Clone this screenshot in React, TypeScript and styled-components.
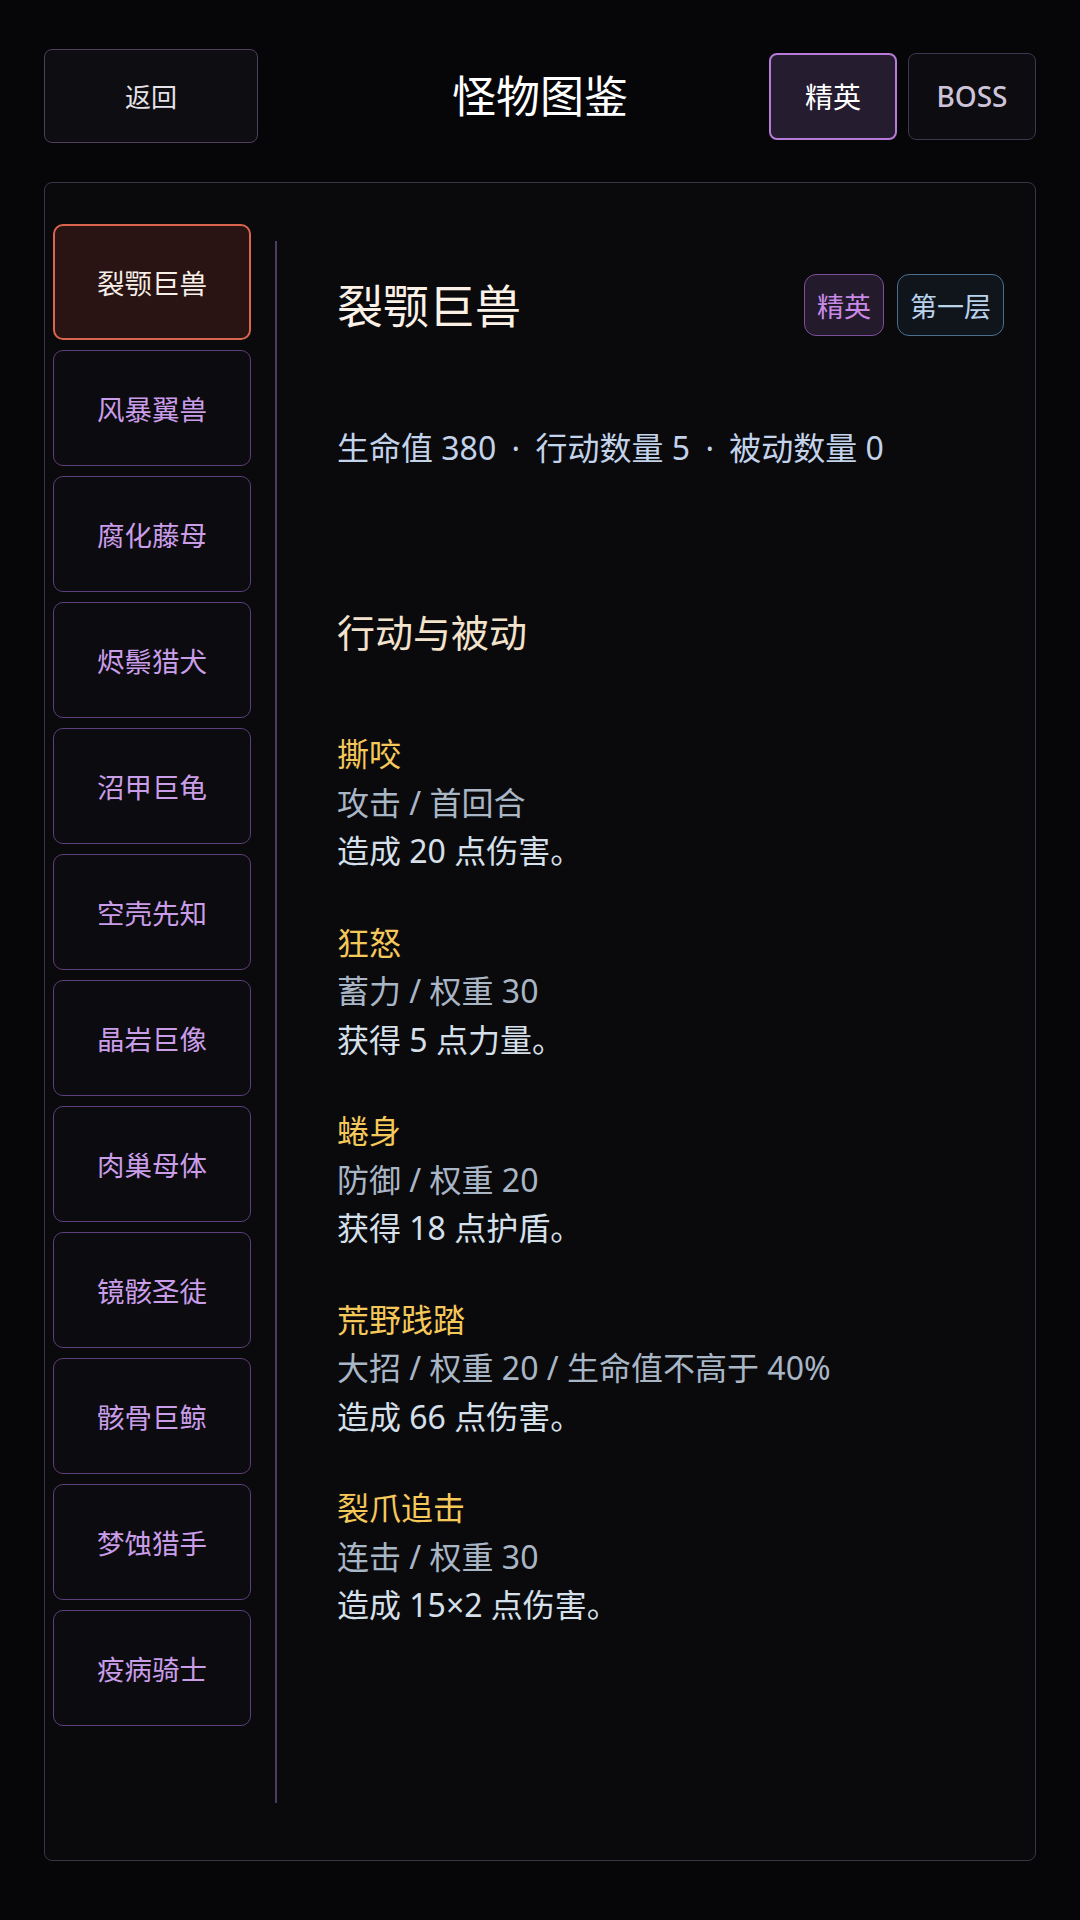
import styled, { createGlobalStyle } from 'styled-components';

const GlobalStyle = createGlobalStyle`
  html, body {
    margin: 0;
    padding: 0;
    background: #060609;
  }
  body {
    font-family: "Noto Sans", "Noto Sans CJK SC", sans-serif;
    color: #e8e4ec;
  }
  * {
    box-sizing: border-box;
  }
`;

const monsters = [
  '裂颚巨兽',
  '风暴翼兽',
  '腐化藤母',
  '烬鬃猎犬',
  '沼甲巨龟',
  '空壳先知',
  '晶岩巨像',
  '肉巢母体',
  '镜骸圣徒',
  '骸骨巨鲸',
  '梦蚀猎手',
  '疫病骑士',
];

const skills = [
  { name: '撕咬', meta: '攻击 / 首回合', desc: '造成 20 点伤害。' },
  { name: '狂怒', meta: '蓄力 / 权重 30', desc: '获得 5 点力量。' },
  { name: '蜷身', meta: '防御 / 权重 20', desc: '获得 18 点护盾。' },
  { name: '荒野践踏', meta: '大招 / 权重 20 / 生命值不高于 40%', desc: '造成 66 点伤害。' },
  { name: '裂爪追击', meta: '连击 / 权重 30', desc: '造成 15×2 点伤害。' },
];

const App = () => {
  return (
    <Page>
      <GlobalStyle />
      <Header>
        <BackButton>返回</BackButton>
        <PageTitle>怪物图鉴</PageTitle>
        <Tabs>
          <TabButton $active>精英</TabButton>
          <TabButton>BOSS</TabButton>
        </Tabs>
      </Header>
      <Panel>
        <Sidebar>
          {monsters.map((name, index) => (
            <MonsterItem key={name} $selected={index === 0}>
              {name}
            </MonsterItem>
          ))}
        </Sidebar>
        <Detail>
          <DetailHead>
            <MonsterName>裂颚巨兽</MonsterName>
            <Tags>
              <Tag $tone="elite">精英</Tag>
              <Tag $tone="floor">第一层</Tag>
            </Tags>
          </DetailHead>
          <Stats>
            生命值 380 <Dot>·</Dot> 行动数量 5 <Dot>·</Dot> 被动数量 0
          </Stats>
          <SectionTitle>行动与被动</SectionTitle>
          <SkillList>
            {skills.map((skill) => (
              <Skill key={skill.name}>
                <SkillName>{skill.name}</SkillName>
                <SkillMeta>{skill.meta}</SkillMeta>
                <SkillDesc>{skill.desc}</SkillDesc>
              </Skill>
            ))}
          </SkillList>
        </Detail>
      </Panel>
    </Page>
  );
};

const Page = styled.div`
  min-height: 100vh;
  display: flex;
  flex-direction: column;
  padding: 49px 44px 59px;
`;

const Header = styled.header`
  display: grid;
  grid-template-columns: 1fr auto 1fr;
  align-items: center;
  height: 94px;
`;

const BackButton = styled.button`
  justify-self: start;
  width: 214px;
  height: 94px;
  background: #0e0d11;
  border: 1px solid #4d3f5e;
  border-radius: 8px;
  color: #e6e2ea;
  font-family: "Noto Sans", "Noto Sans CJK SC", sans-serif;
  font-size: 26px;
  cursor: pointer;
`;

const PageTitle = styled.h1`
  margin: 0;
  font-size: 44px;
  font-weight: 400;
  color: #ffffff;
  line-height: 1;
`;

const Tabs = styled.div`
  justify-self: end;
  display: flex;
  gap: 11px;
`;

const TabButton = styled.button<{ $active?: boolean }>`
  width: 128px;
  height: 87px;
  border-radius: 8px;
  font-family: "Noto Sans", "Noto Sans CJK SC", sans-serif;
  font-size: 28px;
  font-weight: ${(p) => (p.$active ? 400 : 500)};
  cursor: pointer;
  background: ${(p) => (p.$active ? '#261c30' : '#0d0c11')};
  border: ${(p) => (p.$active ? '2px solid #b67ad8' : '1px solid #3f3650')};
  color: ${(p) => (p.$active ? '#ffffff' : '#cdc4da')};
`;

const Panel = styled.section`
  flex: 1;
  margin-top: 39px;
  display: flex;
  gap: 24px;
  padding: 41px 31px 57px 8px;
  background: #0a0a0d;
  border: 1px solid #3a3448;
  border-radius: 8px;
`;

const Sidebar = styled.nav`
  width: 198px;
  flex-shrink: 0;
  align-self: flex-start;
  display: flex;
  flex-direction: column;
  gap: 10px;
`;

const MonsterItem = styled.button<{ $selected?: boolean }>`
  height: 116px;
  border-radius: 10px;
  font-family: "Noto Sans", "Noto Sans CJK SC", sans-serif;
  font-size: 27.5px;
  cursor: pointer;
  background: ${(p) => (p.$selected ? '#2a1313' : '#0c0b0f')};
  border: ${(p) => (p.$selected ? '2px solid #d9654f' : '1px solid #5c3f7c')};
  color: ${(p) => (p.$selected ? '#f6efe8' : '#c99de8')};
`;

const Detail = styled.div`
  flex: 1;
  margin-top: 17px;
  border-left: 2px solid #4a3d60;
  padding: 33px 0 0 60px;
`;

const DetailHead = styled.div`
  display: flex;
  align-items: center;
  justify-content: space-between;
  height: 62px;
`;

const MonsterName = styled.h2`
  margin: 0;
  font-size: 46px;
  font-weight: 400;
  color: #fbf1e6;
  line-height: 1;
`;

const Tags = styled.div`
  display: flex;
  gap: 13px;
`;

const Tag = styled.span<{ $tone: 'elite' | 'floor' }>`
  display: flex;
  align-items: center;
  height: 62px;
  padding: 0 12px;
  border-radius: 12px;
  font-size: 27px;
  background: ${(p) => (p.$tone === 'elite' ? '#231a2b' : '#10151c')};
  border: 1px solid ${(p) => (p.$tone === 'elite' ? '#7d4e9a' : '#4b6f90')};
  color: ${(p) => (p.$tone === 'elite' ? '#c88ae6' : '#b9d3ec')};
`;

const Stats = styled.p`
  margin: 88px 0 0;
  font-size: 32px;
  line-height: 48px;
  color: #c2d3ea;
`;

const Dot = styled.span`
  margin: 0 7px;
`;

const SectionTitle = styled.h3`
  margin: 134px 0 0;
  font-size: 38px;
  font-weight: 400;
  line-height: 53px;
  color: #f3e3cc;
`;

const SkillList = styled.div`
  margin-top: 71px;
  display: flex;
  flex-direction: column;
  gap: 43px;
`;

const Skill = styled.div`
  display: flex;
  flex-direction: column;
  font-size: 32px;
  line-height: 48.5px;
`;

const SkillName = styled.div`
  color: #f5c85a;
`;

const SkillMeta = styled.div`
  color: #a9b6c6;
`;

const SkillDesc = styled.div`
  color: #d6e0eb;
`;

export default App;
